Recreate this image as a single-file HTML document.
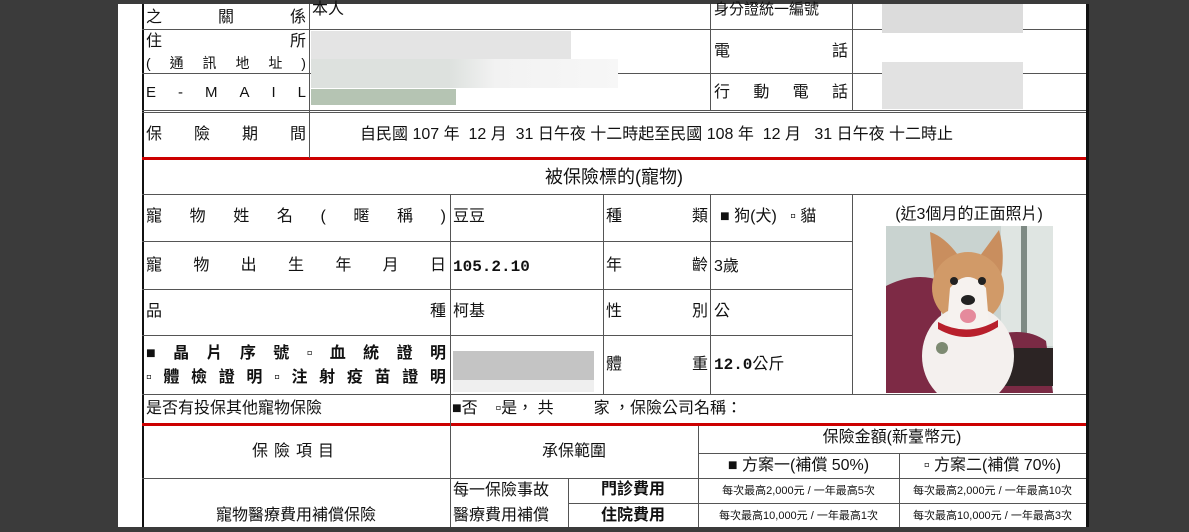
<!DOCTYPE html>
<html><head><meta charset="utf-8"><style>
*{margin:0;padding:0;box-sizing:border-box}
body{width:1189px;height:532px;background:#3b3b3b;position:relative;overflow:hidden;font-family:"Liberation Sans","Noto Sans CJK TC",sans-serif;color:#111}
.pg{position:absolute;left:118px;top:4px;width:968px;height:523px;background:#fff}
.h,.v{position:absolute;background:#555}
.h{height:1px}.v{width:1px}
.t{position:absolute;font-size:16px;line-height:20px;white-space:nowrap}
.s{display:flex;justify-content:space-between}
.c{text-align:center}
.b{position:absolute}
.sm{font-size:11px}
.bd{font-weight:bold}
</style></head><body>
<div class="pg"></div>
<div class="v" style="left:142px;top:4px;height:523px;width:2px;background:#111"></div>
<div class="v" style="left:1086px;top:4px;height:523px;width:3px;background:#111"></div>
<div class="h" style="left:142px;top:29px;width:944px"></div>
<div class="h" style="left:142px;top:73px;width:944px"></div>
<div class="h" style="left:142px;top:110px;width:944px"></div>
<div class="h" style="left:142px;top:112px;width:944px"></div>
<div class="h" style="left:142px;top:157px;width:944px;height:3px;background:#cc0000"></div>
<div class="h" style="left:142px;top:194px;width:944px"></div>
<div class="h" style="left:142px;top:241px;width:710px"></div>
<div class="h" style="left:142px;top:289px;width:710px"></div>
<div class="h" style="left:142px;top:335px;width:710px"></div>
<div class="h" style="left:142px;top:394px;width:944px"></div>
<div class="h" style="left:142px;top:423px;width:944px;height:3px;background:#cc0000"></div>
<div class="h" style="left:698px;top:453px;width:388px"></div>
<div class="h" style="left:142px;top:478px;width:944px"></div>
<div class="h" style="left:568px;top:503px;width:518px"></div>
<div class="v" style="left:309px;top:4px;height:154px"></div>
<div class="v" style="left:710px;top:4px;height:106px"></div>
<div class="v" style="left:852px;top:4px;height:106px"></div>
<div class="v" style="left:450px;top:194px;height:333px"></div>
<div class="v" style="left:603px;top:194px;height:200px"></div>
<div class="v" style="left:710px;top:194px;height:200px"></div>
<div class="v" style="left:852px;top:194px;height:200px"></div>
<div class="v" style="left:698px;top:426px;height:101px"></div>
<div class="v" style="left:899px;top:453px;height:74px"></div>
<div class="v" style="left:568px;top:478px;height:49px"></div>
<div class="b" style="left:311px;top:31px;width:260px;height:28px;background:#e4e4e4"></div>
<div class="b" style="left:311px;top:59px;width:307px;height:29px;background:linear-gradient(90deg,#dde1de 0,#dde1de 45%,#f2f2f2 60%,#f7f7f7 100%)"></div>
<div class="b" style="left:311px;top:89px;width:145px;height:16px;background:#b5c4b3"></div>
<div class="b" style="left:882px;top:4px;width:141px;height:29px;background:#dcdcdc"></div>
<div class="b" style="left:882px;top:62px;width:141px;height:47px;background:#e2e2e2"></div>
<div class="b" style="left:453px;top:351px;width:141px;height:29px;background:#c4c4c4"></div>
<div class="b" style="left:453px;top:380px;width:141px;height:12px;background:#efefef"></div>
<div class="t s" style="left:146px;top:8px;width:160px"><span>之</span><span>關</span><span>係</span></div>
<div class="t" style="left:312px;top:0px">本人</div>
<div class="t s" style="left:714px;top:0px;width:134px;font-size:15px"><span>身分證統一編號</span></div>
<div class="t s" style="left:146px;top:32px;width:160px"><span>住</span><span>所</span></div>
<div class="t s" style="left:146px;top:53px;width:160px;font-size:14px"><span>(</span><span>通</span><span>訊</span><span>地</span><span>址</span><span>)</span></div>
<div class="t s" style="left:146px;top:83px;width:160px;font-size:15px"><span>E</span><span>-</span><span>M</span><span>A</span><span>I</span><span>L</span></div>
<div class="t s" style="left:714px;top:42px;width:134px"><span>電</span><span>話</span></div>
<div class="t s" style="left:714px;top:83px;width:134px"><span>行</span><span>動</span><span>電</span><span>話</span></div>
<div class="t s" style="left:146px;top:125px;width:160px"><span>保</span><span>險</span><span>期</span><span>間</span></div>
<div class="t" style="left:360px;top:125px">自民國 107 年&nbsp; 12 月&nbsp; 31 日午夜 十二時起至民國 108 年&nbsp; 12 月&nbsp;&nbsp; 31 日午夜 十二時止</div>
<div class="t c" style="left:142px;top:166px;width:944px;font-size:18px;line-height:22px">被保險標的(寵物)</div>
<div class="t s" style="left:146px;top:207px;width:300px"><span>寵</span><span>物</span><span>姓</span><span>名</span><span>(</span><span>暱</span><span>稱</span><span>)</span></div>
<div class="t" style="left:453px;top:207px">豆豆</div>
<div class="t s" style="left:606px;top:207px;width:102px"><span>種</span><span>類</span></div>
<div class="t" style="left:720px;top:207px">■ 狗(犬)&nbsp;&nbsp; ▫ 貓</div>
<div class="t c" style="left:852px;top:205px;width:234px">(近3個月的正面照片)</div>
<div class="t s" style="left:146px;top:256px;width:300px"><span>寵</span><span>物</span><span>出</span><span>生</span><span>年</span><span>月</span><span>日</span></div>
<div class="t bd" style="left:453px;top:257px;font-family:'Liberation Mono',monospace">105.2.10</div>
<div class="t s" style="left:606px;top:256px;width:102px"><span>年</span><span>齡</span></div>
<div class="t" style="left:714px;top:257px">3歲</div>
<div class="t s" style="left:146px;top:302px;width:300px"><span>品</span><span>種</span></div>
<div class="t" style="left:453px;top:302px">柯基</div>
<div class="t s" style="left:606px;top:302px;width:102px"><span>性</span><span>別</span></div>
<div class="t" style="left:714px;top:302px">公</div>
<div class="t s bd" style="left:146px;top:344px;width:300px"><span>■</span><span>晶</span><span>片</span><span>序</span><span>號</span><span>▫</span><span>血</span><span>統</span><span>證</span><span>明</span></div>
<div class="t s bd" style="left:146px;top:368px;width:300px"><span>▫</span><span>體</span><span>檢</span><span>證</span><span>明</span><span>▫</span><span>注</span><span>射</span><span>疫</span><span>苗</span><span>證</span><span>明</span></div>
<div class="t s" style="left:606px;top:355px;width:102px"><span>體</span><span>重</span></div>
<div class="t bd" style="left:714px;top:355px"><span style="font-family:'Liberation Mono',monospace">12.0</span><span style="font-weight:normal">公斤</span></div>
<svg style="position:absolute;left:886px;top:226px" width="167" height="167" viewBox="0 0 167 167">
<rect width="167" height="167" fill="#c9d3d0"/>
<rect x="115" y="0" width="52" height="120" fill="#dfe5e2"/>
<rect x="135" y="0" width="6" height="110" fill="#7e8a84"/>
<path d="M0 60 Q30 45 55 55 L55 167 L0 167Z" fill="#7d2a45"/>
<path d="M105 110 Q140 100 160 115 L167 167 L100 167Z" fill="#7a2a44"/>
<rect x="118" y="122" width="49" height="38" fill="#2c2424"/>
<path d="M48 50 L44 6 Q62 12 78 38Z" fill="#c98e5e"/>
<path d="M88 38 L113 4 Q120 30 114 55Z" fill="#c98e5e"/>
<ellipse cx="82" cy="62" rx="36" ry="36" fill="#d19a68"/>
<ellipse cx="82" cy="130" rx="46" ry="50" fill="#f4f0ee"/>
<path d="M64 62 Q82 40 100 62 L104 110 L60 110Z" fill="#f6f2ef"/>
<circle cx="68" cy="55" r="4" fill="#222"/><circle cx="96" cy="55" r="4" fill="#222"/>
<ellipse cx="82" cy="74" rx="7" ry="5" fill="#222"/>
<ellipse cx="82" cy="90" rx="8" ry="7" fill="#e58a9c"/>
<path d="M52 96 Q82 112 112 94 L112 101 Q82 120 52 103Z" fill="#b8202c"/>
<circle cx="56" cy="122" r="6" fill="#7d8a72"/>
</svg>
<div class="t" style="left:146px;top:399px">是否有投保其他寵物保險</div>
<div class="t" style="left:452px;top:399px">■否&nbsp;&nbsp;&nbsp; ▫是， 共&nbsp;&nbsp;&nbsp;&nbsp;&nbsp;&nbsp;&nbsp;&nbsp; 家 ，保險公司名稱：</div>
<div class="t c" style="left:142px;top:442px;width:308px;letter-spacing:6px">保險項目</div>
<div class="t c" style="left:450px;top:442px;width:248px">承保範圍</div>
<div class="t c" style="left:698px;top:428px;width:388px">保險金額(新臺幣元)</div>
<div class="t c" style="left:698px;top:456px;width:201px">■ 方案一(補償 50%)</div>
<div class="t c" style="left:899px;top:456px;width:187px">▫ 方案二(補償 70%)</div>
<div class="t" style="left:453px;top:481px">每一保險事故</div>
<div class="t" style="left:453px;top:506px">醫療費用補償</div>
<div class="t c bd" style="left:568px;top:480px;width:130px">門診費用</div>
<div class="t c bd" style="left:568px;top:506px;width:130px">住院費用</div>
<div class="t c sm" style="left:698px;top:481px;width:201px">每次最高2,000元 / 一年最高5次</div>
<div class="t c sm" style="left:899px;top:481px;width:187px">每次最高2,000元 / 一年最高10次</div>
<div class="t c sm" style="left:698px;top:506px;width:201px">每次最高10,000元 / 一年最高1次</div>
<div class="t c sm" style="left:899px;top:506px;width:187px">每次最高10,000元 / 一年最高3次</div>
<div class="t c" style="left:142px;top:506px;width:308px">寵物醫療費用補償保險</div>
<div class="b" style="left:0;top:527px;width:1189px;height:5px;background:#3b3b3b"></div>
</body></html>
